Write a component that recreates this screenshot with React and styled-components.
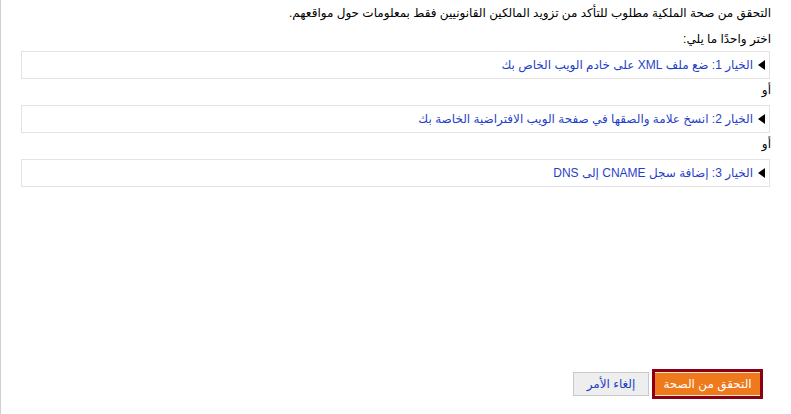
import styled, { createGlobalStyle } from 'styled-components';

const GlobalStyle = createGlobalStyle`
  html, body {
    margin: 0;
    padding: 0;
    background: #fff;
  }
  body {
    font-family: 'Liberation Sans', 'DejaVu Sans', Arial, sans-serif;
    font-size: 12px;
    color: #000;
  }
`;

const options = [
  { num: 1, text: <>ضع ملف XML على خادم الويب الخاص بك</> },
  { num: 2, text: <>انسخ علامة والصقها في صفحة الويب الافتراضية الخاصة بك</> },
  { num: 3, text: <>إضافة سجل CNAME إلى DNS</> },
];

function App() {
  return (
    <>
      <GlobalStyle />
      <StPage dir="rtl">
        <StIntro>
          التحقق من صحة الملكية مطلوب للتأكد من تزويد المالكين القانونيين فقط بمعلومات حول مواقعهم.
        </StIntro>
        <StChoose>اختر واحدًا ما يلي:</StChoose>
        <StOptions>
          {options.map((opt, i) => (
            <div key={opt.num}>
              {i > 0 && <StOr>أو</StOr>}
              <StOptionBox>
                <StArrow />
                <StOptionLink href="#">
                  الخيار {opt.num}: {opt.text}
                </StOptionLink>
              </StOptionBox>
            </div>
          ))}
        </StOptions>
        <StFooter>
          <StVerifyButton>التحقق من الصحة</StVerifyButton>
          <StCancelButton>إلغاء الأمر</StCancelButton>
        </StFooter>
      </StPage>
    </>
  );
}

export default App;

const StPage = styled.div`
  box-sizing: border-box;
  height: 414px;
  border-left: 1px solid #cfcfcf;
  padding: 5px 20px 15px 20px;
  display: flex;
  flex-direction: column;
`;

const StIntro = styled.p`
  margin: 0;
  line-height: 16px;
`;

const StChoose = styled.p`
  margin: 10px 0 0;
  line-height: 16px;
`;

const StOptions = styled.div`
  margin-top: 4px;
  display: flex;
  flex-direction: column;
`;

const StOr = styled.div`
  height: 26px;
  line-height: 23px;
  padding-bottom: 3px;
  box-sizing: border-box;
`;

const StOptionBox = styled.div`
  height: 28px;
  box-sizing: border-box;
  border: 1px solid #e3e3e3;
  margin-right: 1px;
  display: flex;
  align-items: center;
  padding-right: 4px;
  gap: 5px;
`;

const StArrow = styled.span`
  width: 0;
  height: 0;
  border-top: 5px solid transparent;
  border-bottom: 5px solid transparent;
  border-right: 7px solid #000;
`;

const StOptionLink = styled.a`
  color: #1f3fc8;
  text-decoration: none;
`;

const StFooter = styled.div`
  margin-top: auto;
  display: flex;
  align-items: center;
  gap: 3px;
  padding-right: 8px;
`;

const StVerifyButton = styled.button`
  box-sizing: border-box;
  width: 111px;
  height: 30px;
  border: 3px solid #8a0014;
  background: #ee7a1b;
  box-shadow: inset 0 1px 0 #fde3c8, inset 0 -1px 0 #fde3c8;
  color: #fff;
  font-family: inherit;
  font-size: 12px;
  padding: 0;
  cursor: pointer;
`;

const StCancelButton = styled.button`
  box-sizing: border-box;
  width: 76px;
  height: 24px;
  border: 1px solid #c8c8c8;
  background: #eeeeee;
  color: #1f3fc8;
  font-family: inherit;
  font-size: 12px;
  padding: 0;
  cursor: pointer;
`;
